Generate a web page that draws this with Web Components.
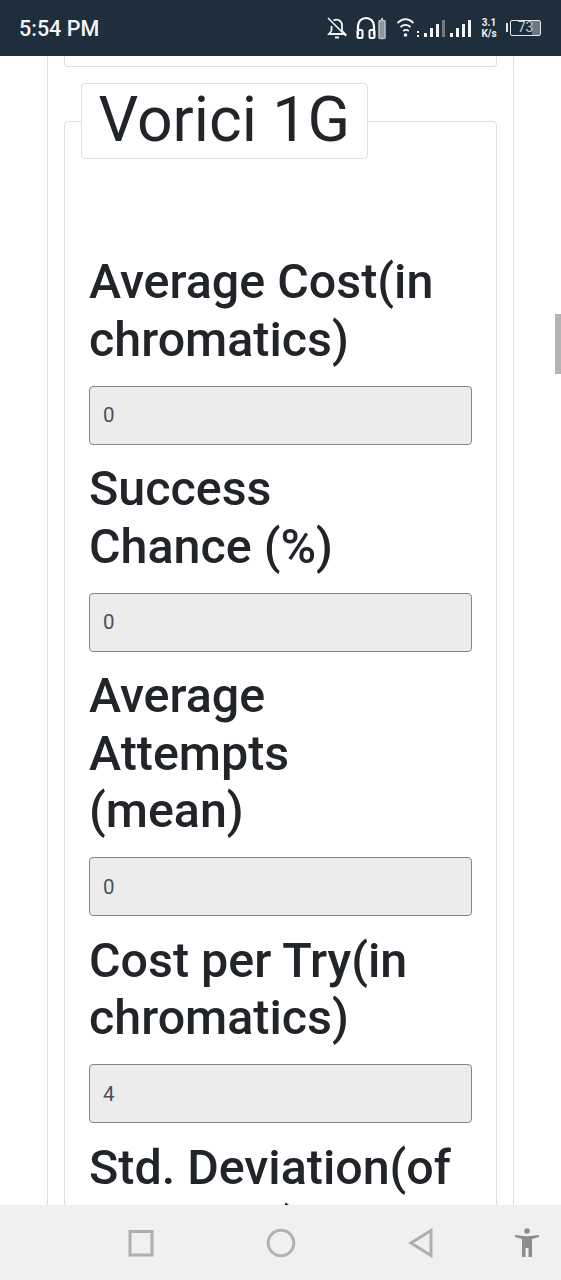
<!DOCTYPE html>
<html lang="en">
<head>
<meta charset="utf-8">
<title>Vorici 1G</title>
<style>
	html, body { margin: 0; padding: 0; background: #fff; }
</style>
</head>
<body>
<phone-frame>
	<status-bar slot="top" time="5:54 PM"></status-bar>
	<calc-card>
		<calc-panel heading="Vorici 1G">
			<calc-field label="Average Cost(in chromatics)" value="0"></calc-field>
			<calc-field label="Success Chance&nbsp;(%)" value="0"></calc-field>
			<calc-field label="Average Attempts (mean)" value="0"></calc-field>
			<calc-field label="Cost per Try(in chromatics)" value="4"></calc-field>
			<calc-field label="Std. Deviation(of attempts)" value="0"></calc-field>
		</calc-panel>
	</calc-card>
	<nav-bar slot="bottom"></nav-bar>
</phone-frame>

<script>
/**
 * PhoneFrame
 * Full window column: status bar, clipped page, navigation bar.
 */
class PhoneFrame extends HTMLElement {
	constructor() {
		super();
		this.attachShadow({ mode: 'open' }).innerHTML = `
    <style>
        :host {
          display: flex;
          flex-direction: column;
          width: 561px;
          height: 1280px;
          overflow: hidden;
          position: relative;
          font-family: Roboto, "Liberation Sans", sans-serif;
        }
        #page {
          flex: 1;
          min-height: 0;
          overflow: hidden;
        }
        #thumb {
          position: absolute;
          left: 555px;
          top: 314px;
          width: 6px;
          height: 60px;
          background: #b4b4b4;
        }
    </style>
    <slot name="top"></slot>
    <div id="page"><slot></slot></div>
    <slot name="bottom"></slot>
    <div id="thumb"></div>
    `;
	}
}

/**
 * StatusBar
 */
class StatusBar extends HTMLElement {
	constructor() {
		super();
		this.attachShadow({ mode: 'open' });
	}

	connectedCallback() {
		const time = this.getAttribute('time') || '';
		this.shadowRoot.innerHTML = `
    <style>
        :host {
          display: flex;
          flex: none;
          align-items: center;
          justify-content: space-between;
          height: 56px;
          padding: 0 20px 0 19px;
          box-sizing: border-box;
          background: #1f2e3d;
          color: #fff;
        }
        #time { font-size: 21.5px; font-weight: 500; color: #f4f6f7; }
        #icons { display: flex; align-items: center; }
        svg { display: block; }
        #speed {
          width: 16px;
          margin-left: 8px;
          font-size: 10px;
          font-weight: 700;
          line-height: 11px;
          text-align: center;
          white-space: nowrap;
          color: #eef0f2;
        }
        #battery {
          position: relative;
          width: 31px;
          height: 16px;
          margin-left: 13px;
          box-sizing: border-box;
          border: 1.5px solid #e4e6e8;
          border-radius: 2px;
          font-size: 14px;
          line-height: 13px;
          text-align: center;
          color: #c9ced2;
          background: linear-gradient(90deg, #1f2e3d 0, #1f2e3d 74%, #6d7882 74%, #6d7882 100%);
        }
        #battery::before {
          content: "";
          position: absolute;
          left: -5px;
          top: 2px;
          width: 2px;
          height: 9px;
          background: #e4e6e8;
        }
    </style>
    <span id="time">${time}</span>
    <div id="icons">
      <svg width="20" height="22" viewBox="0 0 20 22" fill="none" stroke="#f2f4f5" stroke-width="1.800">
        <path d="M4.500 14V9M6.500 3.500A5.500 5.500 0 0 1 15 8V14L18 17H2L4.500 14"/>
        <path d="M1 1 19 19" stroke-width="1.600"/>
        <path d="M8 20.500h4" stroke-width="2"/>
      </svg>
      <svg width="30" height="24" viewBox="0 0 30 24" fill="none" stroke="#fff" style="margin-left:9px">
        <path d="M2 19V10a8 8 0 0 1 16 0v9" stroke-width="2.200"/>
        <rect x="1.500" y="14" width="5" height="8" rx="1.500" stroke-width="2"/>
        <rect x="13.500" y="14" width="5" height="8" rx="1.500" stroke-width="2"/>
        <rect x="23" y="4.500" width="6" height="18" rx="1" stroke="#b9bfc4" stroke-width="1.500" fill="#8d969e"/>
        <rect x="25" y="2" width="2" height="2" fill="#b9bfc4" stroke="none"/>
      </svg>
      <svg width="76" height="22" viewBox="0 0 76 22" style="margin-left:11px">
        <g fill="none" stroke="#f2f4f5" stroke-width="1.800">
          <path d="M.5 6C5.500 1 11.500 1 16.500 6"/>
          <path d="M3.500 10C7 7 10 7 13.500 10"/>
          <path d="M6.200 14c1.800-1.500 3.800-1.500 5.600 0"/>
        </g>
        <circle cx="8.500" cy="18" r="1.800" fill="#f2f4f5"/>
        <g fill="#f2f4f5">
          <rect x="20" y="14" width="2" height="2"/><rect x="20" y="18" width="2" height="2"/>
          <rect x="27" y="16" width="3" height="4"/>
          <rect x="33" y="11" width="3" height="9"/>
          <rect x="39" y="7" width="3" height="13"/>
          <rect x="45" y="3" width="3" height="17" fill="#6f7a84"/>
          <rect x="53" y="16" width="3" height="4"/>
          <rect x="59" y="11" width="3" height="9"/>
          <rect x="65" y="7" width="3" height="13"/>
          <rect x="71" y="3" width="3" height="17"/>
        </g>
      </svg>
      <div id="speed">3.1<br>K/s</div>
      <div id="battery">73</div>
    </div>
    `;
	}
}

/**
 * CalcCard
 * Outer card, with the bottom edge of the previous section above it.
 */
class CalcCard extends HTMLElement {
	constructor() {
		super();
		this.attachShadow({ mode: 'open' }).innerHTML = `
    <style>
        :host {
          display: block;
          margin: 0 47px;
          border: solid #dfdfdf;
          border-width: 0 1.5px;
          padding: 0 16px;
        }
        #prev {
          height: 10px;
          border: 1.5px solid #dfdfdf;
          border-top: 0;
          border-radius: 0 0 4px 4px;
        }
    </style>
    <div id="prev"></div>
    <slot></slot>
    `;
	}
}

/**
 * CalcPanel
 * Fieldset with a boxed legend.
 */
class CalcPanel extends HTMLElement {
	constructor() {
		super();
		this.attachShadow({ mode: 'open' });
	}

	connectedCallback() {
		const heading = this.getAttribute('heading') || '';
		this.shadowRoot.innerHTML = `
    <style>
        :host {
          display: block;
          margin-top: 16px;
        }
        fieldset {
          margin: 0;
          min-width: 0;
          padding: 94px 24px 0;
          border: 1.5px solid #dfdfdf;
          border-radius: 4px;
        }
        legend {
          margin-left: -8px;
          padding: 0 16.5px;
          height: 76px;
          box-sizing: border-box;
          border: 1.5px solid #dfdfdf;
          border-radius: 4px;
          background: #fff;
          font-size: 62.5px;
          font-weight: 400;
          line-height: 72px;
          color: #212529;
        }
    </style>
    <fieldset>
      <legend>${heading}</legend>
      <slot></slot>
    </fieldset>
    `;
	}
}

/**
 * CalcField
 * Large label above a readonly input.
 */
class CalcField extends HTMLElement {
	constructor() {
		super();
		this.attachShadow({ mode: 'open' });
	}

	connectedCallback() {
		const label = this.getAttribute('label') || '';
		const value = this.getAttribute('value') || '';
		this.shadowRoot.innerHTML = `
    <style>
        :host {
          display: block;
          margin-bottom: 15.5px;
        }
        label {
          display: block;
          max-width: 363px;
          margin-bottom: 17.5px;
          font-size: 48.4px;
          font-weight: 500;
          line-height: 57.5px;
          color: #212529;
        }
        input {
          display: block;
          width: 100%;
          height: 59px;
          box-sizing: border-box;
          margin: 0;
          padding: 0 13px;
          border: 1.5px solid #7f8890;
          border-radius: 4px;
          outline: 0;
          background: #ececec;
          font-family: inherit;
          font-size: 20.5px;
          color: #495057;
        }
    </style>
    <label for="f">${label}</label>
    <input id="f" type="text" readonly value="${value}">
    `;
	}
}

/**
 * NavBar
 * Android soft keys.
 */
class NavBar extends HTMLElement {
	constructor() {
		super();
		this.attachShadow({ mode: 'open' }).innerHTML = `
    <style>
        :host {
          display: flex;
          flex: none;
          align-items: center;
          height: 75px;
          padding-left: 128px;
          box-sizing: border-box;
          background: #f0f0f0;
        }
        svg { display: block; flex: none; }
    </style>
    <svg width="26" height="28" viewBox="0 0 26 28" fill="none" stroke="#aeaeae" stroke-width="3" style="margin-right:112px">
      <rect x="2" y="2.500" width="22" height="23.500"/>
    </svg>
    <svg width="30" height="30" viewBox="0 0 30 30" fill="none" stroke="#b2b2b2" stroke-width="3" style="margin-right:112px">
      <circle cx="15" cy="15" r="12.800"/>
    </svg>
    <svg width="26" height="30" viewBox="0 0 26 30" fill="none" stroke="#aeaeae" stroke-width="3" style="margin-right:80px">
      <path d="M23 2.500V27.500L3 15Z"/>
    </svg>
    <svg width="26" height="30" viewBox="0 0 26 30" fill="#8c8c8c">
      <circle cx="13" cy="3" r="2.800"/>
      <path d="M1 7 12 8.200h2L25 7v2L18 11v18h-3.500v-9h-3v9H8V11L1 9Z"/>
    </svg>
    `;
	}
}

window.customElements.define('phone-frame', PhoneFrame);
window.customElements.define('status-bar', StatusBar);
window.customElements.define('calc-card', CalcCard);
window.customElements.define('calc-panel', CalcPanel);
window.customElements.define('calc-field', CalcField);
window.customElements.define('nav-bar', NavBar);
</script>
</body>
</html>
